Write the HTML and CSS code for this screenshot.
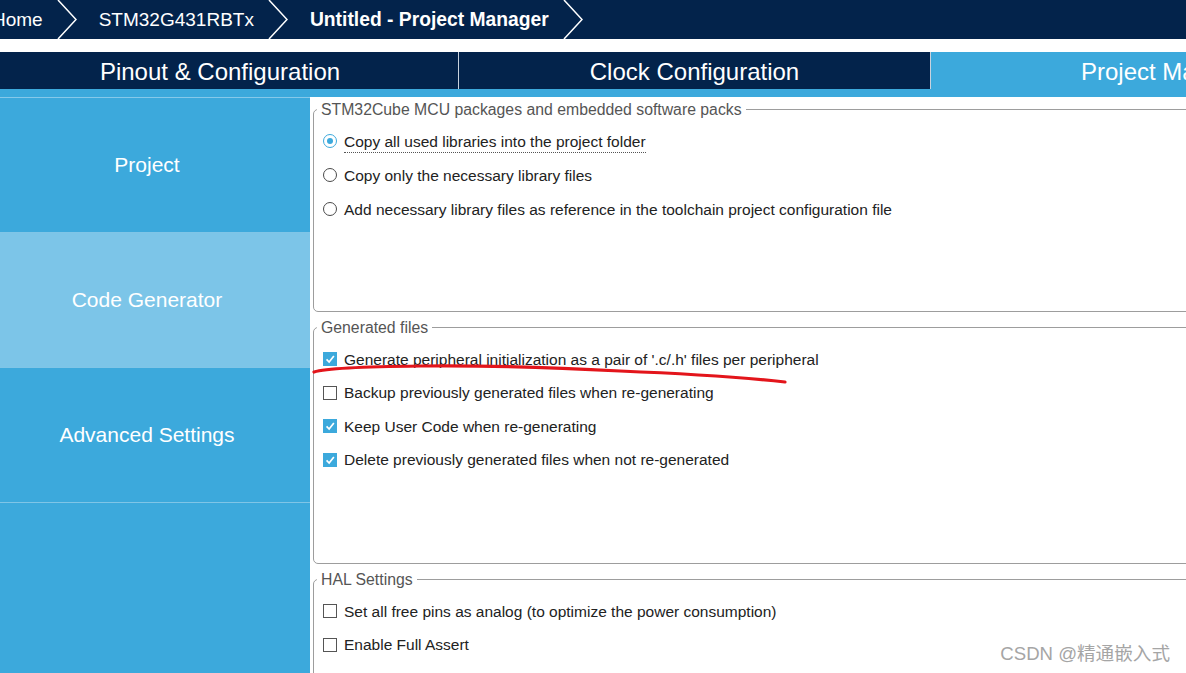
FILE: index.html
```html
<!DOCTYPE html>
<html>
<head>
    <title>Untitled - Project Manager</title>
    <meta name="viewport" content="width=device-width, initial-scale=1.0">
    <link rel="stylesheet" href="styles.css">
</head>
<body>
    <div class="crumbs">
        <span class="crumb">Home</span>
        <svg class="chev" viewBox="0 0 20 39"><polyline points="1,0 19,19.5 1,39"/></svg>
        <span class="crumb">STM32G431RBTx</span>
        <svg class="chev" viewBox="0 0 20 39"><polyline points="1,0 19,19.5 1,39"/></svg>
        <span class="crumb current">Untitled - Project Manager</span>
        <svg class="chev" viewBox="0 0 20 39"><polyline points="1,0 19,19.5 1,39"/></svg>
    </div>

    <div class="tabs">
        <div class="tab first">Pinout &amp; Configuration</div>
        <div class="tab">Clock Configuration</div>
        <div class="tab active">Project Manager</div>
    </div>
    <div class="strip"></div>

    <div class="main">
        <div class="side">
            <div class="side-item">Project</div>
            <div class="side-item active">Code Generator</div>
            <div class="side-item">Advanced Settings</div>
        </div>

        <div class="content">
            <fieldset class="group packs">
                <legend>STM32Cube MCU packages and embedded software packs</legend>
                <div class="opts">
                    <div class="opt"><span class="radio on"></span><span class="focus">Copy all used libraries into the project folder</span></div>
                    <div class="opt"><span class="radio"></span><span>Copy only the necessary library files</span></div>
                    <div class="opt"><span class="radio"></span><span>Add necessary library files as reference in the toolchain project configuration file</span></div>
                </div>
            </fieldset>

            <fieldset class="group gen">
                <legend>Generated files</legend>
                <div class="opts">
                    <div class="opt"><span class="check on"><svg viewBox="0 0 14 14"><polyline points="3,7.5 6,10.5 11.5,3.5"/></svg></span><span>Generate peripheral initialization as a pair of '.c/.h' files per peripheral</span></div>
                    <div class="opt"><span class="check"></span><span>Backup previously generated files when re-generating</span></div>
                    <div class="opt"><span class="check on"><svg viewBox="0 0 14 14"><polyline points="3,7.5 6,10.5 11.5,3.5"/></svg></span><span>Keep User Code when re-generating</span></div>
                    <div class="opt"><span class="check on"><svg viewBox="0 0 14 14"><polyline points="3,7.5 6,10.5 11.5,3.5"/></svg></span><span>Delete previously generated files when not re-generated</span></div>
                </div>
            </fieldset>

            <fieldset class="group hal">
                <legend>HAL Settings</legend>
                <div class="opts">
                    <div class="opt"><span class="check"></span><span>Set all free pins as analog (to optimize the power consumption)</span></div>
                    <div class="opt"><span class="check"></span><span>Enable Full Assert</span></div>
                </div>
            </fieldset>
        </div>
    </div>

    <!-- hand drawn mark over the first option -->
    <svg class="scribble" viewBox="0 0 1186 673">
        <path d="M314 372 Q 330 367 420 366 T 620 371 Q 720 375 785 382"/>
    </svg>

    <div class="watermark">CSDN @精通嵌入式</div>
</body>
</html>
```

FILE: styles.css
```css
body {
    margin: 0;
    width: 1186px;
    height: 673px;
    overflow: hidden;
    position: relative;
    background: #fff;
    font-family: "Liberation Sans", Arial, sans-serif;
}

/* breadcrumb bar */
.crumbs {
    height: 39px;
    margin: 0 0 13px -8px;
    background: #03234b;
    color: #fff;
    font-size: 19px;
    display: flex;
    align-items: center;
    white-space: nowrap;
}
.crumb.current {
    font-weight: bold;
    font-size: 19.3px;
}
.chev {
    width: 20px;
    height: 39px;
    margin: 0 22px 0 14px;
    flex: none;
}
.chev polyline {
    fill: none;
    stroke: #fff;
    stroke-width: 1.5;
}

/* main tabs */
.tabs {
    height: 37px;
    margin-left: -18px;
    background: #03234b;
    display: flex;
    white-space: nowrap;
}
.tab {
    flex: 0 0 472px;
    box-sizing: border-box;
    padding-top: 3px;
    display: flex;
    align-items: center;
    justify-content: center;
    color: #fff;
    font-size: 24px;
    border-right: 1px solid #c8d2de;
}
.tab.first {
    flex-basis: 477px;
}
.tab.active {
    flex-basis: 476px;
    background: #3ca9dc;
    border-right: none;
}
.strip {
    height: 8px;
    background: #3ca9dc;
}

.main {
    display: grid;
    grid-template-columns: 310px 1fr;
    height: 576px;
}

/* left menu */
.side {
    background: #3ca9dc;
    border-top: 1px solid #86c9ea;
}
.side-item {
    height: 134px;
    padding-right: 16px;
    border-bottom: 1px solid #7fc5e7;
    display: flex;
    align-items: center;
    justify-content: center;
    color: #fff;
    font-size: 21px;
}
.side-item.active {
    background: #7cc5e8;
}

/* settings */
.content {
    padding-left: 3px;
    overflow: hidden;
}
.group {
    box-sizing: border-box;
    margin: 0 -20px 0 0;
    padding: 0;
    border: 1px solid #9d9d9d;
    border-radius: 5px;
}
.group legend {
    margin-left: 3px;
    padding: 0 4px;
    color: #555;
    font-size: 15.8px;
    line-height: 17px;
}
.packs {
    margin-top: 4px;
    height: 211px;
}
.gen {
    margin-top: 7px;
    height: 245px;
}
.hal {
    margin-top: 7px;
    height: 200px;
}
.opts {
    padding: 6px 0 0 9px;
}
.opt {
    height: 34px;
    display: flex;
    align-items: center;
    gap: 7px;
    color: #222;
    font-size: 15.5px;
    line-height: 17px;
    white-space: nowrap;
}
.gen .opt:nth-child(n+2),
.hal .opt:nth-child(n+2) {
    height: 33.5px;
}
.focus {
    padding-bottom: 2px;
    margin-top: 3px;
    border-bottom: 1px dotted #555;
}

.radio {
    box-sizing: border-box;
    width: 14px;
    height: 14px;
    border: 1.5px solid #4a4a4a;
    border-radius: 50%;
    flex: none;
    position: relative;
}
.radio.on {
    border-color: #3ca9dc;
}
.radio.on::after {
    content: "";
    position: absolute;
    left: 2.5px;
    top: 2.5px;
    width: 6px;
    height: 6px;
    border-radius: 50%;
    background: #3ca9dc;
}

.check {
    box-sizing: border-box;
    width: 14px;
    height: 14px;
    border: 1px solid #555;
    flex: none;
}
.check.on {
    background: #3ca9dc;
    border-color: #3ca9dc;
}
.check svg {
    display: block;
    width: 12px;
    height: 12px;
}
.check polyline {
    fill: none;
    stroke: #fff;
    stroke-width: 2;
}

.scribble {
    position: absolute;
    left: 0;
    top: 0;
    width: 1186px;
    height: 673px;
    pointer-events: none;
}
.scribble path {
    fill: none;
    stroke: #e3151b;
    stroke-width: 3.2;
    stroke-linecap: round;
}

.watermark {
    position: absolute;
    right: 16px;
    bottom: 8px;
    color: #a5a5a5;
    font-size: 18.6px;
    font-family: "Liberation Sans", "Noto Sans CJK SC", sans-serif;
    text-shadow: 0 0 1px #fff;
}
```
